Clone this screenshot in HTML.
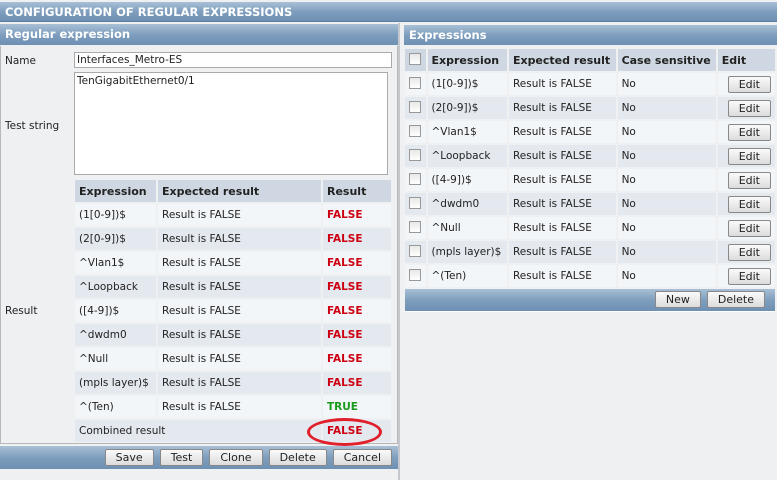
<!DOCTYPE html>
<html><head><style>
*{margin:0;padding:0;box-sizing:border-box}
body{width:777px;height:480px;background:#eef0f2;font-family:"DejaVu Sans",Verdana,sans-serif;font-size:10.5px;color:#222;position:relative;overflow:hidden}
.bar{position:absolute;background:linear-gradient(#a9c0d6,#7f9ebe 50%,#6e90b3);color:#fff;font-weight:bold;padding-left:5px}
.a{position:absolute}
table{border-collapse:separate;border-spacing:2px;position:absolute}
td{padding:0 4px;height:22px;white-space:nowrap}
th{background:#cfd8e2;text-align:left;padding:0 4px;height:22px;font-size:11px;white-space:nowrap}
tr.o td{background:#f3f6f9}
tr.e td{background:#e4e9ef}
.f{color:#cc0011;font-weight:bold}
.t{color:#1a9a1a;font-weight:bold}
.btn{display:inline-block;border:1px solid #888;background:linear-gradient(#fafafa,#dcdcdc);border-radius:2px;height:17px;line-height:15px;padding:0 10px;color:#222;font-size:11px;font-weight:normal;margin-left:6px}
.cb{display:inline-block;width:12px;height:12px;border:1px solid #999;background:linear-gradient(#e8e8e8,#fff)}
</style></head><body>
<div class="bar" style="left:0;top:2px;width:777px;height:20px;line-height:20px;font-size:11.5px;border-bottom:1px solid #5a7c9f">CONFIGURATION OF REGULAR EXPRESSIONS</div>
<div class="bar" style="left:0;top:24px;width:398px;height:21px;line-height:21px;font-size:11.5px">Regular expression</div>
<div class="a" style="left:0;top:46px;width:398px;height:398px;border:1px solid #b8b8b8;border-top:none"></div>
<div class="a" style="left:5px;top:55px">Name</div>
<div class="a" style="left:74px;top:52px;width:318px;height:16px;border:1px solid #aaa;background:#fff;padding-left:2px;line-height:14px">Interfaces_Metro-ES</div>
<div class="a" style="left:5px;top:120px">Test string</div>
<div class="a" style="left:74px;top:72px;width:314px;height:103px;border:1px solid #aaa;background:#fff;padding:2px">TenGigabitEthernet0/1</div>
<div class="a" style="left:5px;top:305px">Result</div>
<table style="left:73px;top:178px;width:320px">
<tr><th style="width:81px">Expression</th><th style="width:163px">Expected result</th><th>Result</th></tr>
<tr class="o"><td>(1[0-9])$</td><td>Result is FALSE</td><td class="f">FALSE</td></tr>
<tr class="e"><td>(2[0-9])$</td><td>Result is FALSE</td><td class="f">FALSE</td></tr>
<tr class="o"><td>^Vlan1$</td><td>Result is FALSE</td><td class="f">FALSE</td></tr>
<tr class="e"><td>^Loopback</td><td>Result is FALSE</td><td class="f">FALSE</td></tr>
<tr class="o"><td>([4-9])$</td><td>Result is FALSE</td><td class="f">FALSE</td></tr>
<tr class="e"><td>^dwdm0</td><td>Result is FALSE</td><td class="f">FALSE</td></tr>
<tr class="o"><td>^Null</td><td>Result is FALSE</td><td class="f">FALSE</td></tr>
<tr class="e"><td>(mpls layer)$</td><td>Result is FALSE</td><td class="f">FALSE</td></tr>
<tr class="o"><td>^(Ten)</td><td>Result is FALSE</td><td class="t">TRUE</td></tr>
<tr class="e"><td colspan="2">Combined result</td><td class="f">FALSE</td></tr>
</table>
<div class="a" style="left:307px;top:418px;width:75px;height:28px;border:3px solid #e0202a;border-radius:50%"></div>
<div class="bar" style="left:0;top:446px;width:398px;height:23px;text-align:right;padding:3px 6px 0 0">
<span class="btn">Save</span><span class="btn">Test</span><span class="btn">Clone</span><span class="btn">Delete</span><span class="btn">Cancel</span></div>
<div class="a" style="left:398px;top:23px;width:2px;height:457px;background:#c4c8cc"></div>
<div class="bar" style="left:404px;top:25px;width:373px;height:20px;line-height:20px;font-size:11.5px">Expressions</div>
<table style="left:403px;top:47px;width:374px">
<tr><th style="width:21px;padding:0 4px"><span class="cb"></span></th><th style="width:81px">Expression</th><th style="width:108px">Expected result</th><th style="width:99px">Case sensitive</th><th>Edit</th></tr>
<tr class="o"><td><span class="cb"></span></td><td>(1[0-9])$</td><td>Result is FALSE</td><td>No</td><td><span class="btn">Edit</span></td></tr>
<tr class="e"><td><span class="cb"></span></td><td>(2[0-9])$</td><td>Result is FALSE</td><td>No</td><td><span class="btn">Edit</span></td></tr>
<tr class="o"><td><span class="cb"></span></td><td>^Vlan1$</td><td>Result is FALSE</td><td>No</td><td><span class="btn">Edit</span></td></tr>
<tr class="e"><td><span class="cb"></span></td><td>^Loopback</td><td>Result is FALSE</td><td>No</td><td><span class="btn">Edit</span></td></tr>
<tr class="o"><td><span class="cb"></span></td><td>([4-9])$</td><td>Result is FALSE</td><td>No</td><td><span class="btn">Edit</span></td></tr>
<tr class="e"><td><span class="cb"></span></td><td>^dwdm0</td><td>Result is FALSE</td><td>No</td><td><span class="btn">Edit</span></td></tr>
<tr class="o"><td><span class="cb"></span></td><td>^Null</td><td>Result is FALSE</td><td>No</td><td><span class="btn">Edit</span></td></tr>
<tr class="e"><td><span class="cb"></span></td><td>(mpls layer)$</td><td>Result is FALSE</td><td>No</td><td><span class="btn">Edit</span></td></tr>
<tr class="o"><td><span class="cb"></span></td><td>^(Ten)</td><td>Result is FALSE</td><td>No</td><td><span class="btn">Edit</span></td></tr>
</table>
<div class="bar" style="left:405px;top:289px;width:370px;height:22px;text-align:right;padding:2px 10px 0 0">
<span class="btn">New</span><span class="btn">Delete</span></div>
<div class="a" style="left:403px;top:311px;width:374px;height:1px;background:#fff"></div>
</body></html>
